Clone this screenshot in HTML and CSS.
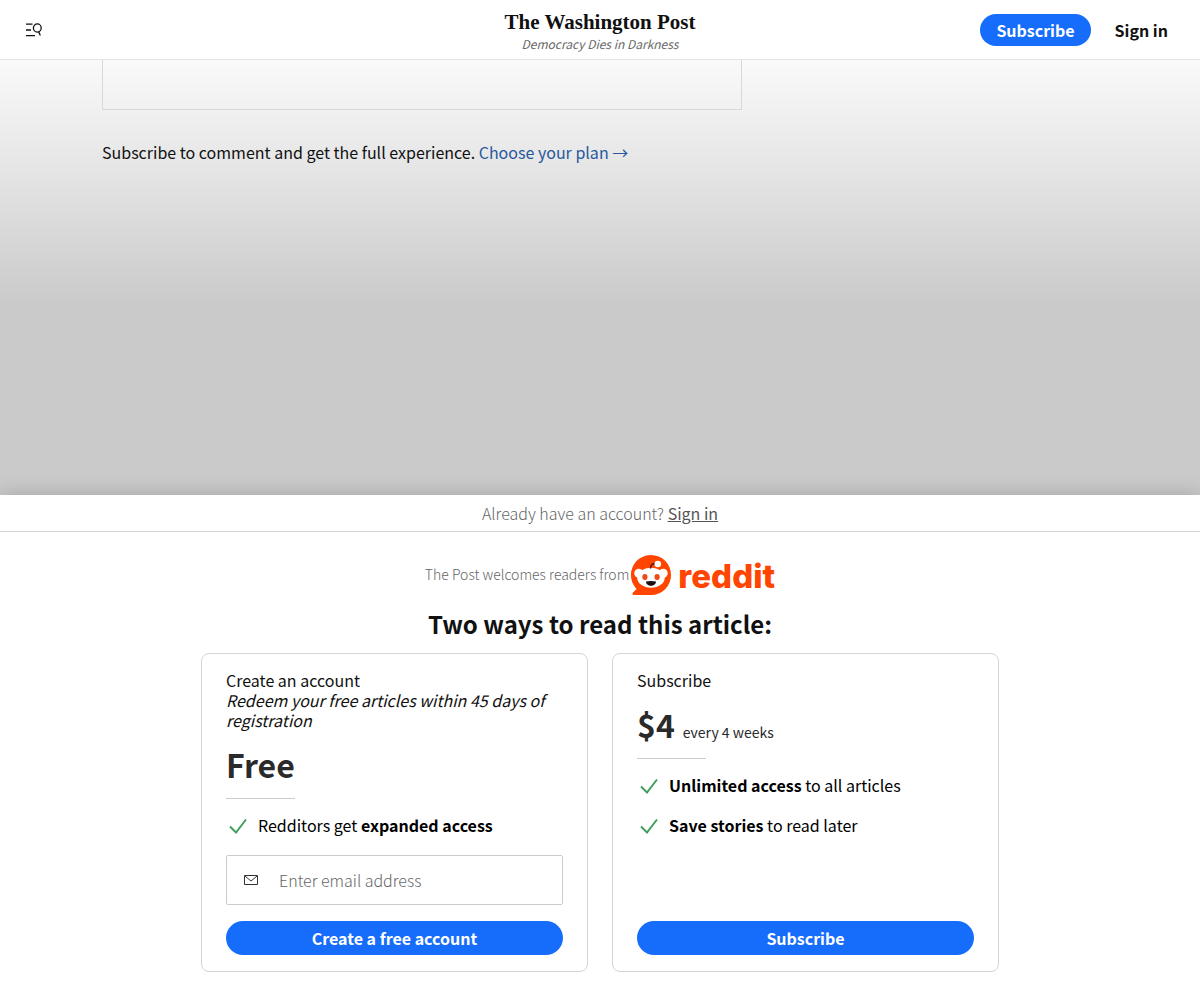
FILE: index.html
```html
<!DOCTYPE html>
<html lang="en">
<head>
  <meta charset="UTF-8">
  <meta name="viewport" content="width=device-width, initial-scale=1">
  <title>The Washington Post</title>
  <link rel="stylesheet" href="styles.css">
</head>
<body>
  <header class="site-header">
    <button class="menu-button" type="button" aria-label="Sections and search">
      <svg width="16" height="16" viewBox="0 0 16 16" fill="none" stroke="currentColor" stroke-width="1.3">
        <path d="M0 2.200h6.500M0 8h5M0 13.600h9"/>
        <ellipse cx="11.300" cy="6" rx="3.900" ry="4.100"/>
        <path d="M12.600 9.600l1.700 4"/>
      </svg>
    </button>
    <div class="brand">
      <a class="brand-name" href="#">The Washington Post</a>
      <span class="brand-tagline">Democracy Dies in Darkness</span>
    </div>
    <nav class="header-actions">
      <button class="btn btn-small" type="button">Subscribe</button>
      <a class="header-signin" href="#">Sign in</a>
    </nav>
  </header>

  <main class="article">
    <div class="article-inner">
      <div class="comment-box"></div>
      <p class="comment-note">Subscribe to comment and get the full experience. <a href="#">Choose your plan →</a></p>
    </div>
  </main>

  <section class="paywall">
    <p class="account-bar">Already have an account? <a href="#">Sign in</a></p>

    <div class="welcome">
      <span class="welcome-text">The Post welcomes readers from</span>
      <span class="reddit">
        <svg width="40" height="40" viewBox="0 0 40 40">
          <path fill="#ff4500" d="M20 0a20 20 0 1 1 0 40H3c-1.600 0-2-1.400-1-2.400L5.700 34A20 20 0 0 1 20 0z"/>
          <circle cx="7.800" cy="18.300" r="4.500" fill="#fff"/>
          <circle cx="32.200" cy="18.300" r="4.500" fill="#fff"/>
          <ellipse cx="20" cy="22.800" rx="13.800" ry="10" fill="#fff"/>
          <path d="M19.500 13.500c0-3 2-5 5-5" fill="none" stroke="#5a1505" stroke-width="1.500"/>
          <circle cx="26.800" cy="9" r="3.300" fill="#fff"/>
          <ellipse cx="13.900" cy="22" rx="2.600" ry="2.900" fill="#f04a12"/>
          <ellipse cx="26.100" cy="22" rx="2.600" ry="2.900" fill="#f04a12"/>
          <path fill="#1b1210" d="M15 26.500q5-1 10 0c0 2.600-2.200 4.300-5 4.300s-5-1.700-5-4.300z"/>
        </svg>
        <span class="reddit-name">reddit</span>
      </span>
    </div>

    <h1>Two ways to read this article:</h1>

    <div class="plans">
      <form class="plan">
        <h2>Create an account</h2>
        <p class="plan-detail">Redeem your free articles within 45 days of registration</p>
        <p class="price"><strong>Free</strong></p>
        <ul class="benefits">
          <li>
            <svg class="check" width="24" height="24" viewBox="0 0 24 24"><path d="M4 12.500l6 6L20 5.500"/></svg>
            <span>Redditors get <b>expanded access</b></span>
          </li>
        </ul>
        <div class="email-field">
          <svg width="14" height="10" viewBox="0 0 14 10" fill="none" stroke="#333"><path d="M.5.5h13v9H.5zM1 1l6 5 6-5"/></svg>
          <input type="email" aria-label="Email address" placeholder="Enter email address">
        </div>
        <button class="btn btn-wide" type="submit">Create a free account</button>
      </form>

      <div class="plan">
        <h2>Subscribe</h2>
        <p class="price"><strong>$4</strong><span class="price-period">every 4 weeks</span></p>
        <ul class="benefits">
          <li>
            <svg class="check" width="24" height="24" viewBox="0 0 24 24"><path d="M4 12.500l6 6L20 5.500"/></svg>
            <span><b>Unlimited access</b> to all articles</span>
          </li>
          <li>
            <svg class="check" width="24" height="24" viewBox="0 0 24 24"><path d="M4 12.500l6 6L20 5.500"/></svg>
            <span><b>Save stories</b> to read later</span>
          </li>
        </ul>
        <button class="btn btn-wide" type="button">Subscribe</button>
      </div>
    </div>
  </section>
</body>
</html>
```
FILE: styles.css
```css
:root {
  --blue: #166dfc;
  --link: #28589c;
  --text: #111;
  --muted: #666;
  --border: #d5d5d5;
  --green: #3f9f5b;
}

* {
  box-sizing: border-box;
}

body {
  margin: 0;
  min-height: 100vh;
  display: flex;
  flex-direction: column;
  font-family: "Noto Sans CJK SC", "Noto Sans", sans-serif;
  font-size: 16px;
  line-height: 20px;
  color: var(--text);
  background: #fff;
}

h1, h2, p, ul {
  margin: 0;
  padding: 0;
}

button, input {
  font: inherit;
}

/* header */
.site-header {
  display: grid;
  grid-template-columns: 1fr auto 1fr;
  align-items: center;
  height: 60px;
  padding: 0 26px;
  border-bottom: 1px solid #e4e4e4;
}

.menu-button {
  display: flex;
  justify-self: start;
  padding: 0;
  border: 0;
  background: none;
  color: var(--text);
  cursor: pointer;
}

.brand {
  display: flex;
  flex-direction: column;
  align-items: center;
}

.brand-name {
  font-family: "Liberation Serif", serif;
  font-size: 21px;
  font-weight: bold;
  line-height: 28px;
  color: var(--text);
  text-decoration: none;
}

.brand-tagline {
  font-size: 12px;
  font-style: italic;
  line-height: 16px;
  color: var(--muted);
}

.header-actions {
  display: flex;
  align-items: center;
  justify-self: end;
  gap: 24px;
  padding-right: 6px;
}

.header-signin {
  font-weight: bold;
  color: var(--text);
  text-decoration: none;
}

.btn {
  border: 0;
  border-radius: 17px;
  background: var(--blue);
  color: #fff;
  font-weight: bold;
  cursor: pointer;
}

.btn-small {
  height: 32px;
  padding: 0 16px;
}

.btn-wide {
  width: 100%;
  height: 34px;
  margin-top: auto;
}

/* article behind the paywall */
.article {
  flex: 1;
  padding: 0 102px;
  background: linear-gradient(#fafafa, #e5e5e5 110px, #cacaca 245px);
}

.article-inner {
  max-width: 640px;
}

.comment-box {
  height: 50px;
  border: 1px solid #d8d8d8;
  border-top: 0;
}

.comment-note {
  margin-top: 32px;
}

.comment-note a {
  color: var(--link);
  text-decoration: none;
}

/* paywall */
.paywall {
  padding-bottom: 28px;
  background: #fff;
  box-shadow: 0 0 20px rgba(0, 0, 0, 0.2);
}

.account-bar {
  padding: 8px;
  border-bottom: 1px solid var(--border);
  font-weight: 300;
  text-align: center;
  color: var(--muted);
}

.account-bar a {
  font-weight: 400;
  color: #555;
}

.welcome {
  display: flex;
  align-items: center;
  justify-content: center;
  gap: 2px;
  margin-top: 23px;
  font-size: 14px;
  font-weight: 300;
  color: var(--muted);
}

.welcome-text {
  padding-bottom: 2px;
}

.reddit {
  display: flex;
  align-items: center;
  gap: 7px;
}

.reddit-name {
  padding-top: 2px;
  font-family: Inter, sans-serif;
  font-size: 33px;
  font-weight: 800;
  color: #ff4500;
}

h1 {
  margin-top: 13px;
  font-size: 24px;
  line-height: 32px;
  text-align: center;
}

.plans {
  display: grid;
  grid-template-columns: 1fr 1fr;
  gap: 24px;
  max-width: 798px;
  margin: 13px auto 0;
}

.plan {
  display: flex;
  flex-direction: column;
  padding: 16px 24px;
  border: 1px solid var(--border);
  border-radius: 8px;
}

.plan h2 {
  font-size: 16px;
  font-weight: 400;
}

.plan-detail {
  font-style: italic;
}

.price {
  margin-top: 14px;
  color: #2a2a2a;
}

.price strong {
  font-size: 32px;
  line-height: 40px;
}

.price::after {
  content: "";
  display: block;
  width: 69px;
  margin-top: 14px;
  border-top: 1px solid #ccc;
}

.price-period {
  margin-left: 8px;
  font-size: 14px;
}

.benefits {
  display: grid;
  gap: 16px;
  margin-top: 15px;
  list-style: none;
  color: #000;
}

.benefits li {
  display: flex;
  align-items: center;
  gap: 8px;
}

.benefits span {
  padding-bottom: 2px;
}

.check {
  fill: none;
  stroke: var(--green);
  stroke-width: 2;
}

.email-field {
  display: flex;
  align-items: center;
  gap: 21px;
  height: 50px;
  margin: 17px 0 16px;
  padding: 0 17px;
  border: 1px solid #ccc;
  border-radius: 2px;
}

.email-field input {
  flex: 1;
  min-width: 0;
  padding: 0;
  border: 0;
  outline: 0;
  background: none;
  font-weight: 300;
}

.email-field input::placeholder {
  color: #666;
}

@media (max-width: 820px) {
  .article {
    padding: 0 24px;
  }

  .plans {
    grid-template-columns: 1fr;
    margin: 13px 16px 0;
  }
}
```
